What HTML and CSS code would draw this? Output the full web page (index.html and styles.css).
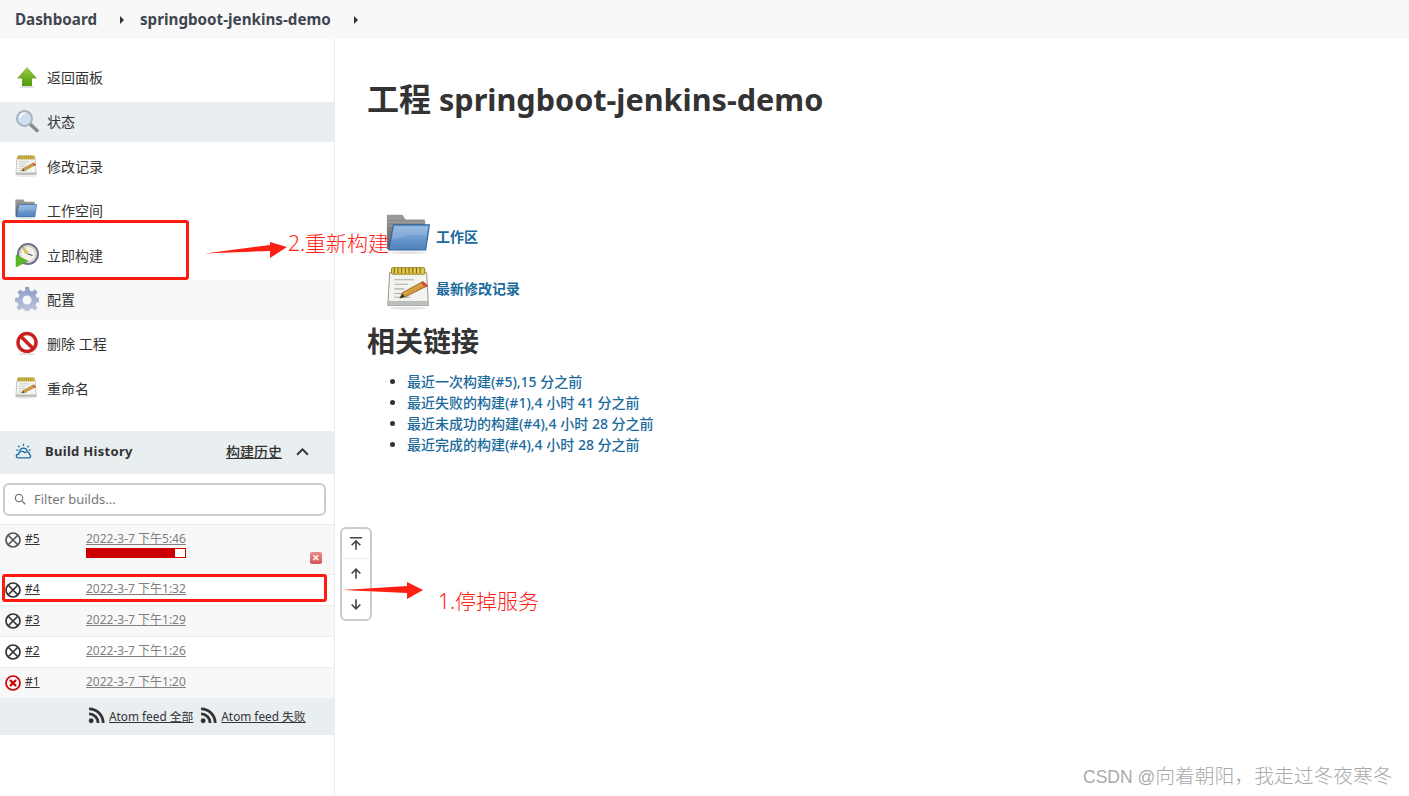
FILE: index.html
```html
<!DOCTYPE html>
<html lang="zh-CN">
<head>
<meta charset="utf-8">
<title>springboot-jenkins-demo</title>
<link rel="stylesheet" href="styles.css">
</head>
<body>
<svg class="defs" aria-hidden="true">
  <defs>
    <linearGradient id="gGreen" x1="0" y1="0" x2="0" y2="1"><stop offset="0" stop-color="#9ccb4e"/><stop offset="1" stop-color="#4e9a06"/></linearGradient>
    <linearGradient id="gFolder" x1="0" y1="0" x2="0" y2="1"><stop offset="0" stop-color="#8db4e0"/><stop offset="1" stop-color="#4f81bd"/></linearGradient>
    <linearGradient id="gBack" x1="0" y1="0" x2="0" y2="1"><stop offset="0" stop-color="#9a9a9a"/><stop offset="1" stop-color="#5d5d5d"/></linearGradient>
    <linearGradient id="gPencil" x1="0" y1="0" x2="1" y2="1"><stop offset="0" stop-color="#f3c25f"/><stop offset="1" stop-color="#b9771c"/></linearGradient>
    <linearGradient id="gGear" x1="0" y1="0" x2="0" y2="1"><stop offset="0" stop-color="#8d9cc6"/><stop offset="1" stop-color="#c3c7dd"/></linearGradient>
    <symbol id="i-up" viewBox="0 0 24 24"><path d="M12 2 22 13.500H17V21H7V13.500H2Z" fill="url(#gGreen)"/><ellipse cx="12" cy="22" rx="8" ry="1.200" fill="#ddd"/></symbol>
    <symbol id="i-search" viewBox="0 0 24 24"><path d="M14 14 22 21.500" stroke="#8a8a8a" stroke-width="3.500" stroke-linecap="round"/><circle cx="9.500" cy="9.500" r="7.500" fill="#cfe0f2" stroke="#a9b3c0" stroke-width="2"/><path d="M5 9a5 5 0 0 1 5-5" fill="none" stroke="#fff" stroke-width="1.500"/></symbol>
    <symbol id="i-note" viewBox="0 0 52 48" preserveAspectRatio="xMinYMid meet"><path d="M4 7H44L46 43H2Z" fill="#f4f4ef" stroke="#8d8d8d"/><rect x="2" y="38" width="44" height="5" fill="#bdbdbd"/><rect x="6" y="2" width="36" height="7" rx="1" fill="#e6c84b" stroke="#8f7a16"/><path d="M9 2v6M13 2v6M17 2v6M21 2v6M25 2v6M29 2v6M33 2v6M37 2v6" stroke="#6b5a10"/><path d="M9 15H30M9 20H24M9 25H20M9 30H17M9 34H26" stroke="#aaa" stroke-width="1.200"/><path d="M40 17 45 21.500 22 33 15 35 18 29Z" fill="url(#gPencil)" stroke="#7a5212" stroke-width=".8"/><path d="M40 17 45 21.500 43 23.500 38 19Z" fill="#d9453a"/><path d="M18 30 15 35 20 33.500Z" fill="#333"/><ellipse cx="24" cy="46" rx="20" ry="1.500" fill="#e4e4e4"/></symbol>
    <symbol id="i-folder" viewBox="0 0 52 48" preserveAspectRatio="xMinYMid meet"><path d="M1 1H18L21 6H42L43 14V38H1Z" fill="url(#gBack)"/><path d="M1 5H16M1 9H42M1 13H42" stroke="#aaa" stroke-width=".8"/><path d="M8 12H47L43 39H3Z" fill="url(#gFolder)" stroke="#2f62a0" stroke-width="1.200"/><path d="M9 14H45L43 24C30 20 18 26 6 28Z" fill="#fff" opacity=".14"/><ellipse cx="24" cy="42" rx="20" ry="1.500" fill="#e4e4e4"/></symbol>
    <symbol id="i-clock" viewBox="0 0 24 24"><circle cx="13" cy="11" r="10" fill="#e9e6da" stroke="#6f6f8f" stroke-width="2"/><circle cx="13" cy="11" r="7.500" fill="#f4f2ea" stroke="#c9c7b8" stroke-width=".8"/><path d="M7 2.500 12 8 13 11 10 10Z" fill="#f0d34a" stroke="#9c8a22" stroke-width=".5"/><path d="M13 11 17.500 12.500" stroke="#555" stroke-width="1.200"/><path d="M1 12 13 18 1 24Z" fill="#5cb82a" stroke="#4c9a20" stroke-width=".5"/></symbol>
    <symbol id="i-gear" viewBox="0 0 24 24"><path fill="url(#gGear)" fill-rule="evenodd" d="M10 0h4l.7 3.600 2.200.9L20 2.400l2.600 2.800-2.100 3 .9 2.200 3.600.6v4l-3.600.7-.9 2.200 2.100 3-2.800 2.700-3-2.100-2.200.9-.6 3.600h-4l-.7-3.600-2.200-.9-3 2.100-2.700-2.800 2.100-3-.9-2.200L0 15v-4l3.600-.6.900-2.200-2.100-3L5.200 2.400l3 2.100 2.200-.9ZM12 8.500a4.500 4.500 0 1 0 0 9 4.500 4.500 0 0 0 0-9Z"/></symbol>
    <symbol id="i-stop" viewBox="0 0 24 24"><circle cx="12" cy="11.500" r="9" fill="#fff" stroke="#cc1f1f" stroke-width="3.500"/><path d="M5.500 5 18.500 18" stroke="#cc1f1f" stroke-width="3.500"/><ellipse cx="12" cy="23" rx="8" ry="1" fill="#ddd"/></symbol>
    <symbol id="i-weather" viewBox="0 0 24 24"><g fill="none" stroke="#1d6fa5" stroke-width="1.900" stroke-linecap="round" stroke-linejoin="round"><path d="M7 11a5.200 5.200 0 0 1 10 0"/><path d="M4 21h16a2.500 2.500 0 0 0 .5-4.800 4 4 0 0 0-4-3.700c-1 0-2 .4-3 1-1-1.200-2.400-1.700-4-1.600C7 12 5.500 13.500 5.300 15.500 3 15.800 1.800 17 1.800 18.500 1.800 20 2.800 21 4 21Z"/><path d="M12 2v1.500M5 4.500 6 5.500M19 4.500 18 5.500M2.500 10H4M20 10h1.500"/></g></symbol>
    <symbol id="i-build" viewBox="0 0 16 16"><circle cx="8" cy="8" r="7" fill="none" stroke="currentColor" stroke-width="1.700"/><path d="M3.500 3.500 12.500 12.500M12.500 3.500 3.500 12.500" stroke="currentColor" stroke-width="1.700"/></symbol>
    <symbol id="i-fail" viewBox="0 0 16 16"><circle cx="8" cy="8" r="7" fill="none" stroke="#cc0003" stroke-width="1.700"/><path d="M5 5 11 11M11 5 5 11" stroke="#cc0003" stroke-width="2.300"/></symbol>
    <symbol id="i-rss" viewBox="0 0 16 16"><circle cx="3" cy="13" r="2.300" fill="#333"/><path d="M1 6.500A8.500 8.500 0 0 1 9.500 15M1 1.700A13.300 13.300 0 0 1 14.300 15" fill="none" stroke="#333" stroke-width="2.600"/></symbol>
  </defs>
</svg>

<header class="crumbs">
  <a class="crumb">Dashboard</a>
  <span class="caret"></span>
  <a class="crumb">springboot-jenkins-demo</a>
  <span class="caret"></span>
</header>

<div class="layout">
  <aside class="side">
    <nav class="tasks">
      <a class="task"><svg class="task-ico"><use href="#i-up"/></svg>返回面板</a>
      <a class="task task-active"><svg class="task-ico"><use href="#i-search"/></svg>状态</a>
      <a class="task"><svg class="task-ico"><use href="#i-note"/></svg>修改记录</a>
      <a class="task"><svg class="task-ico"><use href="#i-folder"/></svg>工作空间</a>
      <a class="task"><svg class="task-ico"><use href="#i-clock"/></svg>立即构建</a>
      <a class="task task-soft"><svg class="task-ico"><use href="#i-gear"/></svg>配置</a>
      <a class="task"><svg class="task-ico"><use href="#i-stop"/></svg>删除 工程</a>
      <a class="task"><svg class="task-ico"><use href="#i-note"/></svg>重命名</a>
    </nav>

    <section class="history">
      <div class="hist-head">
        <svg class="hist-ico"><use href="#i-weather"/></svg>
        <span class="hist-title">Build History</span>
        <a class="hist-link">构建历史</a>
        <svg class="chev" viewBox="0 0 12 8"><path d="M1 7 6 2 11 7" fill="none" stroke="#333" stroke-width="1.800"/></svg>
      </div>
      <div class="filter-wrap">
        <div class="filter">
          <svg class="filter-ico" viewBox="0 0 12 12"><circle cx="5" cy="5" r="3.700" fill="none" stroke="#777" stroke-width="1.200"/><path d="M8 8 11.300 11.300" stroke="#777" stroke-width="1.300"/></svg>
          <span>Filter builds...</span>
        </div>
      </div>
      <div class="builds">
        <div class="build build-tall alt">
          <svg class="st st-run"><use href="#i-build"/></svg>
          <a class="num">#5</a>
          <div class="when-col">
            <a class="when">2022-3-7 下午5:46</a>
            <div class="bar"><div class="bar-fill"></div></div>
          </div>
          <span class="cancel">✕</span>
        </div>
        <div class="build"><svg class="st"><use href="#i-build"/></svg><a class="num">#4</a><a class="when">2022-3-7 下午1:32</a></div>
        <div class="build alt"><svg class="st"><use href="#i-build"/></svg><a class="num">#3</a><a class="when">2022-3-7 下午1:29</a></div>
        <div class="build"><svg class="st"><use href="#i-build"/></svg><a class="num">#2</a><a class="when">2022-3-7 下午1:26</a></div>
        <div class="build alt"><svg class="st"><use href="#i-fail"/></svg><a class="num">#1</a><a class="when">2022-3-7 下午1:20</a></div>
      </div>
      <div class="feeds">
        <svg class="rss"><use href="#i-rss"/></svg><a class="feed">Atom feed 全部</a>
        <svg class="rss rss-2"><use href="#i-rss"/></svg><a class="feed">Atom feed 失败</a>
      </div>
    </section>
  </aside>

  <main class="main">
    <h1 class="title"><span class="title-cjk">工程</span> springboot-jenkins-demo</h1>
    <div class="links">
      <a class="big-link"><svg class="big-ico"><use href="#i-folder"/></svg>工作区</a>
      <a class="big-link"><svg class="big-ico"><use href="#i-note"/></svg>最新修改记录</a>
    </div>
    <h2 class="sub">相关链接</h2>
    <ul class="perma">
      <li><a>最近一次构建(#5),15 分之前</a></li>
      <li><a>最近失败的构建(#1),4 小时 41 分之前</a></li>
      <li><a>最近未成功的构建(#4),4 小时 28 分之前</a></li>
      <li><a>最近完成的构建(#4),4 小时 28 分之前</a></li>
    </ul>
  </main>
</div>

<div class="scroller">
  <button class="sc-btn"><svg class="sc-ico" viewBox="0 0 16 16"><path d="M1 1.500H15M8 15V5M3 10 8 5 13 10" fill="none" stroke="#444" stroke-width="1.800"/></svg></button>
  <button class="sc-btn"><svg class="sc-ico" viewBox="0 0 16 16"><path d="M8 14V3M3 8 8 3 13 8" fill="none" stroke="#444" stroke-width="1.800"/></svg></button>
  <button class="sc-btn"><svg class="sc-ico" viewBox="0 0 16 16"><path d="M8 2V13M3 8 8 13 13 8" fill="none" stroke="#444" stroke-width="1.800"/></svg></button>
</div>

<div class="mark mark-build"></div>
<div class="mark mark-row"></div>
<svg class="arrow arrow-2" viewBox="0 0 82 18"><path d="M0 12.500 65 4 65 1 82 6 65 17 65 10Z" fill="#ff2014"/></svg>
<svg class="arrow arrow-1" viewBox="0 0 82 18"><path d="M0 8 64 4 64 0 80 8 64 17 64 11Z" fill="#ff2014"/></svg>
<span class="note note-2">2.重新构建</span>
<span class="note note-1">1.停掉服务</span>
<span class="watermark">CSDN @<span class="wm-cjk">向着朝阳，我走过冬夜寒冬</span></span>
</body>
</html>
```
FILE: styles.css
```css
* { box-sizing: border-box; }
html, body { margin: 0; height: 796px; overflow: hidden; background: #fff; }
body {
  font-family: "Noto Sans", "Noto Sans CJK SC", sans-serif;
  font-size: 13px;
  color: #333;
  position: relative;
}
.defs { position: absolute; width: 0; height: 0; }

.crumbs {
  height: 39px;
  background: #f8f8f8;
  display: flex;
  align-items: center;
  padding-left: 15px;
  font-weight: 700;
  font-size: 15.200px;
  color: #3f4650;
}
.crumb { line-height: 39px; }
.caret {
  width: 0; height: 0;
  border-left: 4px solid #333;
  border-top: 4px solid transparent;
  border-bottom: 4px solid transparent;
  margin: 0 16px 0 23px;
}

.layout { display: flex; height: 757px; }
.side { width: 335px; border-right: 1px solid #e9eef1; flex: none; }
.tasks { padding-top: 19px; display: flex; flex-direction: column; gap: 4.400px; }
.task {
  height: 40px;
  display: flex;
  align-items: center;
  padding: 0 0 2px 15px;
  gap: 8px;
  font-size: 14px;
  color: #333;
}
.task-active { background: #e9eef1; }
.task-soft { background: #f8f8f8; }
.task-ico { width: 24px; height: 24px; flex: none; }

.history { margin-top: 22px; }
.hist-head {
  height: 43px;
  background: #e9eef1;
  display: flex;
  align-items: center;
  padding: 0 0 2px 15px;
}
.hist-ico { width: 17px; height: 17px; margin-right: 13px; flex: none; }
.hist-title { font-weight: 700; font-size: 13px; letter-spacing: .3px; color: #333; flex: 1; }
.hist-link { font-size: 14px; text-decoration: underline; font-weight: 500; color: #333; }
.chev { width: 13px; height: 9px; margin: 0 25px 0 14px; }

.filter-wrap { padding: 9px 8px 8px 3px; border-bottom: 1px solid #e9eef1; }
.filter {
  height: 33px;
  border: 2px solid #ccc;
  border-radius: 6px;
  display: flex;
  align-items: center;
  padding-left: 9px;
  gap: 8px;
  color: #777;
  font-size: 13px;
}
.filter-ico { width: 12px; height: 12px; flex: none; }

.builds { display: flex; flex-direction: column; }
.build {
  height: 31px;
  display: flex;
  align-items: center;
  border-bottom: 1px solid #e9eef1;
  padding-left: 5px;
  position: relative;
  font-size: 12px;
}
.build:last-child { border-bottom: 0; height: 30px; }
.alt { background: #f8f8f8; }
.build-tall { height: 50px; align-items: flex-start; padding-top: 5px; }
.st { width: 16px; height: 16px; flex: none; color: #333; }
.build-tall .st { margin-top: 2px; color: #555; }
.num { width: 61px; margin: 0 0 2px 4px; text-decoration: underline; color: #333; flex: none; }
.when { color: #808080; text-decoration: underline; display: block; line-height: 14px; margin-bottom: 2px; }
.when-col { display: flex; flex-direction: column; margin-top: 2px; }
.when-col .when { margin-bottom: 0; }
.bar { width: 100px; height: 10px; border: 1px solid #cc0003; background: #fff; margin-top: 2px; }
.bar-fill { width: 90%; height: 100%; background: #cc0003; }
.cancel {
  position: absolute;
  left: 310px;
  top: 27px;
  width: 12px;
  height: 12px;
  border-radius: 2px;
  background: linear-gradient(#e88a8a, #d95555);
  color: #fff;
  font-size: 9px;
  font-weight: 700;
  line-height: 12px;
  text-align: center;
}

.feeds {
  height: 37px;
  background: #e9eef1;
  display: flex;
  align-items: center;
  padding: 0 0 2px 88px;
  font-size: 11.800px;
}
.rss { width: 17px; height: 17px; margin-right: 4px; flex: none; }
.rss-2 { margin-left: 7px; }
.feed { text-decoration: underline; color: #333; }

.main { padding: 0 0 0 32px; flex: 1; }
.title { font-size: 30.600px; line-height: 44px; font-weight: 700; margin: 38px 0 0; color: #333; }
.title-cjk { font-size: 32px; }
.links { margin-top: 91px; display: flex; flex-direction: column; padding-left: 19px; gap: 4px; }
.big-link {
  display: flex;
  align-items: center;
  gap: 1px;
  height: 48px;
  font-weight: 700;
  font-size: 14px;
  color: #1b6a9c;
}
.big-ico { width: 48px; height: 48px; flex: none; margin-right: 1px; }
.sub { font-size: 28px; line-height: 40px; font-weight: 700; margin: 9px 0 0; color: #333; }
.perma { margin: 10px 0 0; padding-left: 40px; font-size: 14px; line-height: 21px; }
.perma a { color: #1b6a9c; font-weight: 500; }

.scroller {
  position: absolute;
  left: 340px;
  top: 527px;
  width: 32px;
  height: 94px;
  border: 2px solid #ccc;
  border-radius: 6px;
  background: #fff;
  display: flex;
  flex-direction: column;
}
.sc-btn {
  flex: 1;
  border: 0;
  padding: 0;
  background: transparent;
  display: flex;
  align-items: center;
  justify-content: center;
  border-bottom: 1px solid #eee;
}
.sc-btn:last-child { border-bottom: 0; }
.sc-ico { width: 14px; height: 17px; }

.mark { position: absolute; border: 3px solid #ff1a0f; border-radius: 3px; }
.mark-build { left: 2px; top: 220px; width: 187px; height: 60px; }
.mark-row { left: 2px; top: 574px; width: 325px; height: 28px; }
.arrow { position: absolute; width: 82px; height: 18px; }
.arrow-2 { left: 205px; top: 241px; }
.arrow-1 { left: 343px; top: 582px; }
.note { position: absolute; color: #ff2014; font-size: 21px; font-weight: 300; line-height: 28px; white-space: nowrap; }
.note-2 { left: 288px; top: 229px; }
.note-1 { left: 438px; top: 587px; }
.watermark {
  position: absolute;
  left: 1083px;
  top: 763px;
  font-family: "Liberation Sans", "Noto Sans CJK SC", sans-serif;
  font-size: 17.500px;
  line-height: 26px;
  color: #aaa;
  white-space: nowrap;
}
.wm-cjk { font-size: 19.800px; font-weight: 300; }
```
